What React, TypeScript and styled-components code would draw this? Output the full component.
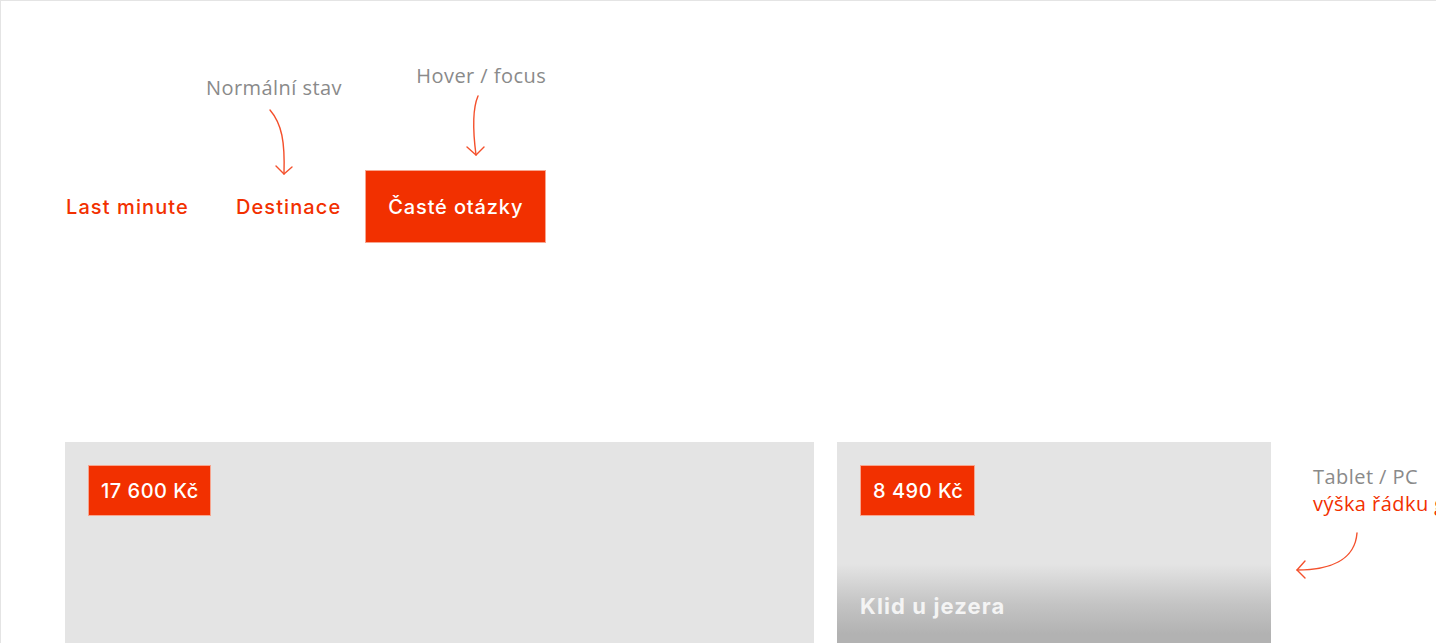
import React from "react";
import styled, { createGlobalStyle } from "styled-components";

const RED = "#f23000";

const Global = createGlobalStyle`
  html, body { margin: 0; padding: 0; background: #fff; }
  body { overflow: hidden; }
  * { box-sizing: border-box; }
`;

const Page = styled.div`
  position: relative;
  height: 100vh;
  overflow: hidden;
  border-top: 1px solid #e4e4e4;
  border-left: 1px solid #e4e4e4;
  padding-top: 169px;
`;

const Nav = styled.nav`
  display: flex;
  align-items: stretch;
  gap: 1px;
  padding-left: 42px;
  height: 73px;
`;

const NavItem = styled.a<{ $active?: boolean }>`
  position: relative;
  display: flex;
  align-items: center;
  padding: 0 22px;
  font-family: Inter, "Liberation Sans", sans-serif;
  font-weight: 500;
  font-size: 20px;
  letter-spacing: ${(p) => (p.$active ? "0.85px" : "1.1px")};
  color: ${(p) => (p.$active ? "#fff" : RED)};
  background: ${(p) => (p.$active ? RED : "transparent")};
  border: 1px solid ${(p) => (p.$active ? "#f7a58f" : "transparent")};
  text-decoration: none;
  white-space: nowrap;
`;

const Callout = styled.div<{ $left: number; $top: number }>`
  position: absolute;
  left: ${(p) => p.$left}px;
  top: ${(p) => p.$top}px;
  display: flex;
  flex-direction: column;
  pointer-events: none;
`;

const NoteText = styled.span<{ $accent?: boolean }>`
  font-family: "Open Sans", sans-serif;
  font-size: 20px;
  font-weight: 400;
  line-height: 27px;
  letter-spacing: 0.45px;
  color: ${(p) => (p.$accent ? RED : "#8a8a8a")};
  white-space: nowrap;
`;

const ArrowSvg = styled.svg<{ $offset: number }>`
  display: block;
  margin-left: ${(p) => p.$offset}px;
  overflow: visible;
  fill: none;
  stroke: #f4502c;
  stroke-width: 1.4;
  stroke-linecap: round;
  stroke-linejoin: round;
`;

const CardRow = styled.section`
  display: flex;
  gap: 23px;
  margin-top: 199px;
  padding-left: 64px;
`;

const Card = styled.article<{ $width: number }>`
  position: relative;
  flex: 0 0 ${(p) => p.$width}px;
  height: 320px;
  background: #e4e4e4;
  padding: 23px;
`;

const Price = styled.span`
  display: inline-flex;
  align-items: center;
  height: 51px;
  padding: 0 11px 0 12px;
  background: ${RED};
  border: 1px solid #f7a58f;
  color: #fff;
  font-family: Inter, "Liberation Sans", sans-serif;
  font-weight: 500;
  font-size: 20px;
  letter-spacing: 0.5px;
`;

const Caption = styled.div`
  position: absolute;
  left: 0;
  right: 0;
  top: 122px;
  bottom: 0;
  padding: 29px 23px 0;
  background: linear-gradient(to bottom, #e4e4e4 0px, #c4c4c4 40px, #b2b2b2 70px, #b2b2b2 100%);
`;

const CaptionTitle = styled.h3`
  margin: 0;
  font-family: Inter, "Liberation Sans", sans-serif;
  font-weight: 700;
  font-size: 22px;
  letter-spacing: 1.1px;
  color: #f4f4f4;
`;

const SideNote = styled.aside`
  position: relative;
  display: flex;
  flex-direction: column;
  margin-left: 19px;
  padding-top: 21px;
`;

const SideArrow = styled(ArrowSvg)`
  position: absolute;
  left: -23px;
  top: 86px;
`;

export default function App() {
  return (
    <Page>
      <Global />
      <Nav>
        <NavItem href="#">Last minute</NavItem>
        <NavItem href="#">
          Destinace
          <Callout $left={-8} $top={-97}>
            <NoteText>Normální stav</NoteText>
            <ArrowSvg $offset={56} width="34" height="77" viewBox="0 0 34 77">
              <path d="M8,9 C20,23 23,41 22,73" />
              <path d="M14,65 L22,73 L30,66" />
            </ArrowSvg>
          </Callout>
        </NavItem>
        <NavItem href="#" $active>
          Časté otázky
          <Callout $left={50} $top={-109}>
            <NoteText>Hover / focus</NoteText>
            <ArrowSvg $offset={45} width="30" height="70" viewBox="0 0 30 70">
              <path d="M17,7 C11,21 12,43 15,66" />
              <path d="M6,58 L15,66 L23,58" />
            </ArrowSvg>
          </Callout>
        </NavItem>
      </Nav>
      <CardRow>
        <Card $width={749}>
          <Price>17 600 Kč</Price>
        </Card>
        <Card $width={434}>
          <Price>8 490 Kč</Price>
          <Caption>
            <CaptionTitle>Klid u jezera</CaptionTitle>
          </Caption>
        </Card>
        <SideNote>
          <NoteText>Tablet / PC</NoteText>
          <NoteText $accent>výška řádku gridu</NoteText>
          <SideArrow $offset={0} width="72" height="56" viewBox="0 0 72 56">
            <path d="M67,5 C65,32 40,42 7,42" />
            <path d="M15,33 L7,42 L15,50" />
          </SideArrow>
        </SideNote>
      </CardRow>
    </Page>
  );
}
